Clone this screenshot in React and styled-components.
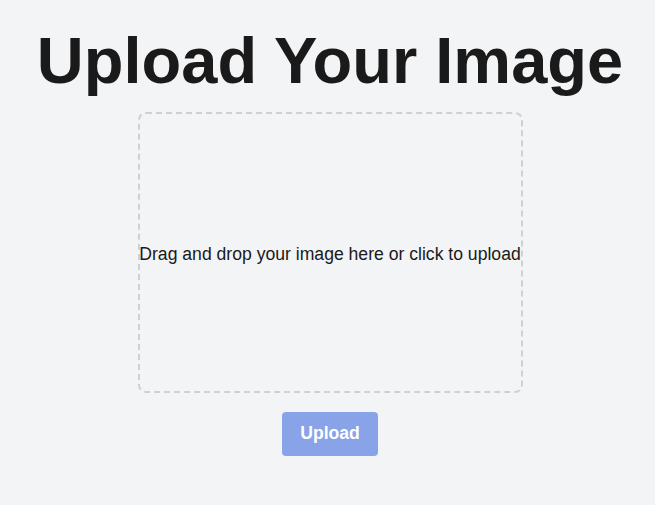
import React from "react";
import styled, { createGlobalStyle } from "styled-components";

const Global = createGlobalStyle`
  html, body { margin: 0; padding: 0; background: #f3f4f6; }
  body { font-family: "Liberation Sans", Arial, sans-serif; color: #1a1a1a; }
`;

const Page = styled.main`
  display: flex;
  flex-direction: column;
  align-items: center;
  padding: 23px 0 0 5px;
`;

const Title = styled.h1`
  margin: 0 0 14px;
  font-size: 65px;
  font-weight: 700;
  color: #1a1a1a;
`;

const DropZone = styled.div`
  box-sizing: border-box;
  width: 385px;
  height: 281px;
  padding-top: 3px;
  border: 2px dashed #cfd0d4;
  border-radius: 8px;
  display: flex;
  align-items: center;
  justify-content: center;
  font-size: 17.6px;
  color: #1a1a1a;
  white-space: nowrap;
  cursor: pointer;
`;

const UploadButton = styled.button`
  margin-top: 19px;
  padding: 11px 18px 12px;
  border: none;
  border-radius: 4px;
  background: #89a3e8;
  color: #ffffff;
  font-family: "Liberation Sans", Arial, sans-serif;
  font-size: 17.6px;
  font-weight: 700;
  line-height: normal;
`;

export default function App() {
  return (
    <>
      <Global />
      <Page>
        <Title>Upload Your Image</Title>
        <DropZone>Drag and drop your image here or click to upload</DropZone>
        <UploadButton disabled>Upload</UploadButton>
      </Page>
    </>
  );
}
